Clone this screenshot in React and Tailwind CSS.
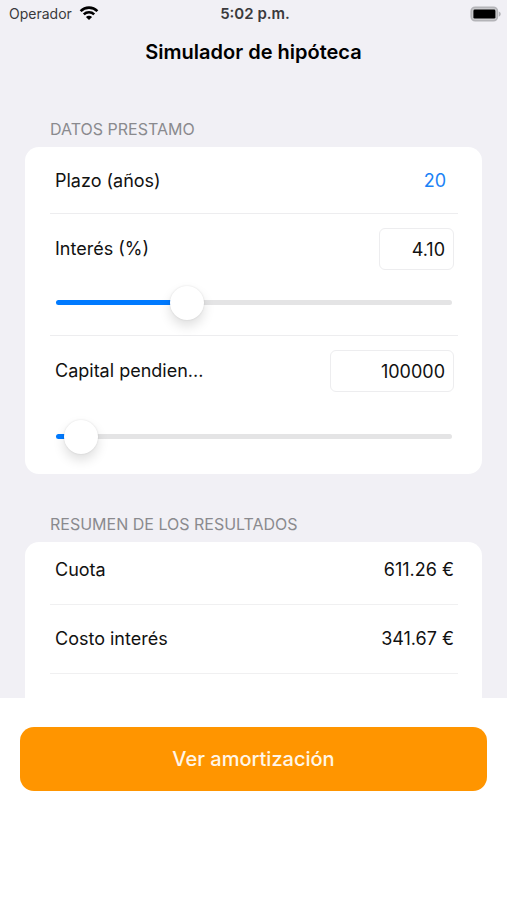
import { useState } from 'react';

const PLAZOS = [5, 10, 15, 20, 25, 30, 35, 40];
const MAX_INTERES = 13;
const MAX_CAPITAL = 4500000;

function StatusBar() {
  return (
    <div className="grid grid-cols-3 items-center h-7 pl-[9px] pr-[6px] text-sm text-[#3a3a3c]">
      <div className="flex items-center gap-[7px]">
        <span>Operador</span>
        <svg width="20" height="16" viewBox="0 0 20 16" fill="none" stroke="#000" strokeWidth="2.6" aria-hidden="true">
          <path d="M1.6 5.1C6.3 .5 13.7 .5 18.4 5.1" />
          <path d="M4.8 8.4C7.7 5.6 12.3 5.6 15.2 8.4" />
          <path d="M10 14.1L6.9 10.9C8.6 9.3 11.4 9.3 13.1 10.9Z" fill="#000" stroke="none" />
        </svg>
      </div>
      <span className="text-center text-[15px] leading-5 font-semibold whitespace-nowrap">5:02 p.m.</span>
      <svg className="justify-self-end" width="31" height="16" viewBox="0 0 31 16" aria-hidden="true">
        <rect x="1.2" y="1.2" width="26.2" height="13.6" rx="4" fill="#c9c9cc" stroke="#b4b4b8" strokeWidth="1.6" />
        <rect x="3.4" y="3.6" width="22" height="9" rx="1.4" fill="#000" />
        <path d="M28.8 5.4C31.4 6.4 31.4 9.6 28.8 10.6Z" fill="#b4b4b8" />
      </svg>
    </div>
  );
}

function SectionTitle({ children }) {
  return <h2 className="px-[25px] text-base leading-6 text-[#8a8a8e]">{children}</h2>;
}

function Slider({ label, value, max, step, onChange }) {
  const pct = (value / max) * 100;
  return (
    <div className="pl-px pr-[2px]">
      <input
        type="range"
        aria-label={label}
        min={0}
        max={max}
        step={step}
        value={value}
        onChange={(e) => onChange(e.target.value)}
        className="block w-full h-[5px] rounded-full appearance-none outline-none cursor-pointer [&::-webkit-slider-thumb]:appearance-none [&::-webkit-slider-thumb]:w-[34px] [&::-webkit-slider-thumb]:h-[34px] [&::-webkit-slider-thumb]:rounded-full [&::-webkit-slider-thumb]:bg-white [&::-webkit-slider-thumb]:shadow-[0_0_2px_rgba(0,0,0,0.12),0_6px_12px_rgba(0,0,0,0.13)]"
        style={{ background: `linear-gradient(to right, #007aff ${pct}%, #e4e4e5 ${pct}%)` }}
      />
    </div>
  );
}

function ResultRow({ label, value, first }) {
  return (
    <div className={`flex justify-between pl-[5px] pr-1 pb-[22px] border-b border-[#f0f0f1] ${first ? 'pt-4' : 'pt-[22px]'}`}>
      <span>{label}</span>
      <span>{value}</span>
    </div>
  );
}

export default function App() {
  const [plazo, setPlazo] = useState(20);
  const [interes, setInteres] = useState('4.10');
  const [capital, setCapital] = useState('100000');

  const field = 'h-[42px] rounded-md border border-[#ededef] bg-white px-2 text-right outline-none';

  return (
    <div className="min-h-screen flex flex-col bg-white font-['Inter','Liberation_Sans',sans-serif] text-[18px] leading-6 text-[#111]">
      <div className="bg-[#f1f0f5]">
        <StatusBar />
        <h1 className="pt-3 text-center text-xl leading-6 font-semibold text-black">Simulador de hipóteca</h1>

        <main className="px-[25px] pt-[53px]">
          <SectionTitle>DATOS PRESTAMO</SectionTitle>
          <section className="mt-[6px] pl-[25px] pr-6 bg-white rounded-[14px]">
            <div className="flex items-center justify-between pl-[5px] pr-1 pt-[22px] pb-5 border-b border-[#ededef]">
              <label htmlFor="plazo">Plazo (años)</label>
              <select
                id="plazo"
                value={plazo}
                onChange={(e) => setPlazo(Number(e.target.value))}
                className="h-6 appearance-none bg-transparent pr-2 text-right text-[#1b82f6] outline-none"
              >
                {PLAZOS.map((p) => <option key={p} value={p}>{p}</option>)}
              </select>
            </div>

            <div className="pl-[5px] pr-1 pt-[14px] pb-[30px] border-b border-[#ededef]">
              <div className="flex items-center justify-between mb-[30px]">
                <label htmlFor="interes">Interés (%)</label>
                <input id="interes" inputMode="decimal" value={interes}
                  onChange={(e) => setInteres(e.target.value)} className={`${field} w-[75px]`} />
              </div>
              <Slider label="Interés" value={Number(interes) || 0} max={MAX_INTERES} step={0.05}
                onChange={(v) => setInteres(Number(v).toFixed(2))} />
            </div>

            <div className="pl-[5px] pr-1 pt-[14px] pb-[35px]">
              <div className="flex items-center justify-between mb-[42px]">
                <label htmlFor="capital">Capital pendien...</label>
                <input id="capital" inputMode="numeric" value={capital}
                  onChange={(e) => setCapital(e.target.value)} className={`${field} w-[124px]`} />
              </div>
              <Slider label="Capital pendiente" value={Number(capital) || 0} max={MAX_CAPITAL} step={1000}
                onChange={setCapital} />
            </div>
          </section>

          <div className="mt-[38px]">
            <SectionTitle>RESUMEN DE LOS RESULTADOS</SectionTitle>
          </div>
          <section className="mt-[6px] pl-[25px] pr-6 pb-6 bg-white rounded-t-[14px]">
            <ResultRow label="Cuota" value="611.26 €" first />
            <ResultRow label="Costo interés" value="341.67 €" />
          </section>
        </main>
      </div>

      <footer className="px-5 pt-[29px]">
        <button type="button" className="w-full h-16 rounded-[14px] bg-[#ff9500] text-xl font-medium text-[#fff6e8]">
          Ver amortización
        </button>
      </footer>
    </div>
  );
}
